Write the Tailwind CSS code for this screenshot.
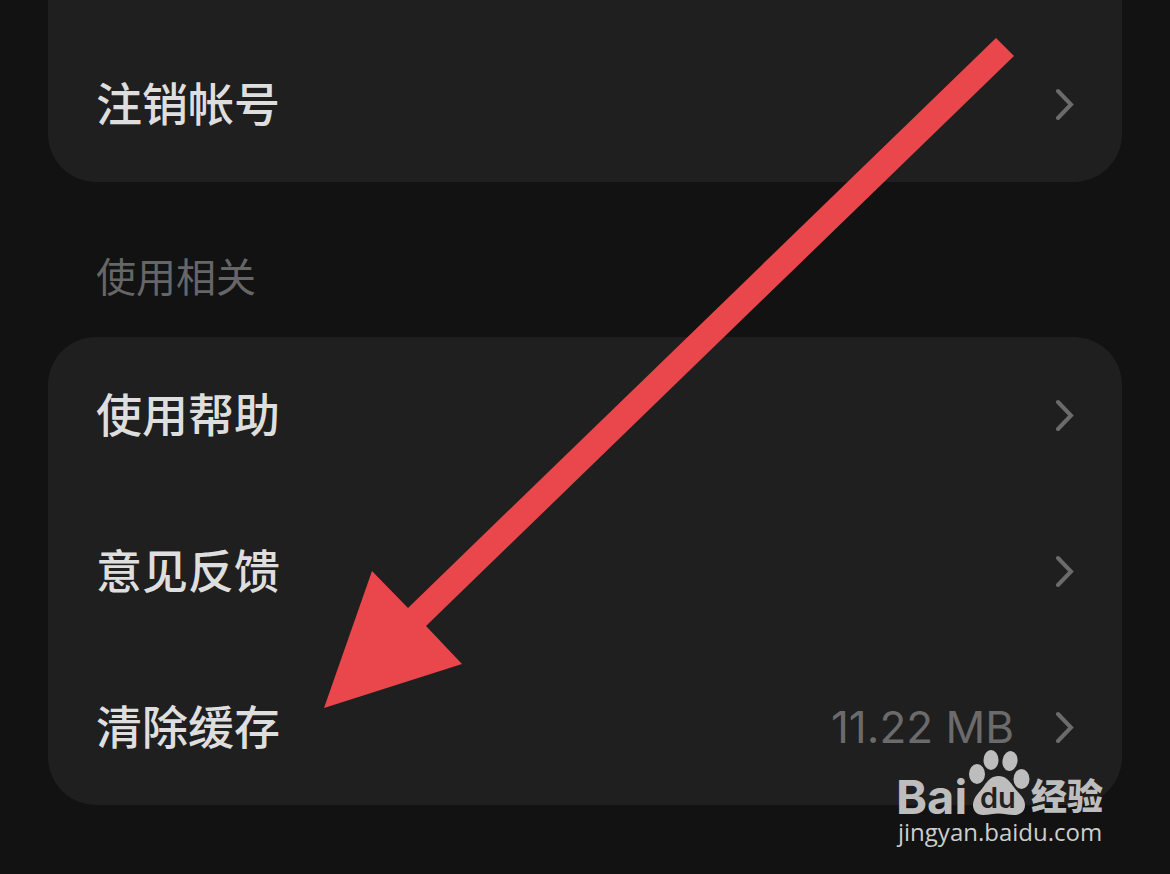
<!DOCTYPE html>
<html lang="zh-CN">
<head>
<meta charset="utf-8">
<meta name="viewport" content="width=device-width, initial-scale=1">
<title>设置</title>
<script src="https://cdn.jsdelivr.net/npm/@tailwindcss/browser@4"></script>
</head>
<body class="bg-[#121212]">
<main class="relative min-h-screen overflow-hidden bg-[#121212] px-12 pb-[69px] font-['Inter','Noto_Sans_CJK_SC',sans-serif] text-[46px] font-medium text-[#dedede]">
  <section class="rounded-b-[48px] bg-[#1f1f1f] pt-[26px]">
    <a href="#" class="flex h-[156px] items-center justify-between px-12">
      <span>注销帐号</span>
      <svg class="h-8 w-5" viewBox="0 0 20 32" fill="none" stroke="#6b6b6b" stroke-width="4" stroke-linecap="round" aria-hidden="true"><path d="M4 3 17 16.500 4 30"/></svg>
    </a>
  </section>
  <h2 class="flex h-[155px] items-center px-12 pt-9 text-[40px] font-normal text-[#666666]">使用相关</h2>
  <nav class="rounded-[48px] bg-[#1f1f1f]">
    <a href="#" class="flex h-[156px] items-center justify-between px-12">
      <span>使用帮助</span>
      <svg class="h-8 w-5" viewBox="0 0 20 32" fill="none" stroke="#6b6b6b" stroke-width="4" stroke-linecap="round" aria-hidden="true"><path d="M4 3 17 16.500 4 30"/></svg>
    </a>
    <a href="#" class="flex h-[156px] items-center justify-between px-12">
      <span>意见反馈</span>
      <svg class="h-8 w-5" viewBox="0 0 20 32" fill="none" stroke="#6b6b6b" stroke-width="4" stroke-linecap="round" aria-hidden="true"><path d="M4 3 17 16.500 4 30"/></svg>
    </a>
    <a href="#" class="flex h-[156px] items-center justify-between px-12">
      <span>清除缓存</span>
      <span class="flex items-center gap-10">
        <span class="text-[44px] font-normal text-[#6b6b6b]">11.22 MB</span>
        <svg class="h-8 w-5" viewBox="0 0 20 32" fill="none" stroke="#6b6b6b" stroke-width="4" stroke-linecap="round" aria-hidden="true"><path d="M4 3 17 16.500 4 30"/></svg>
      </span>
    </a>
  </nav>

  <svg class="pointer-events-none absolute top-[38px] left-[324px] h-[670px] w-[690px]" viewBox="0 0 690 670" aria-hidden="true">
    <path d="M672 0 690 18 102 588 138 626 0 670 48 533 84 570Z" fill="#e9474b"/>
  </svg>

  <svg class="pointer-events-none absolute top-[748px] right-[54px] h-[110px] w-[220px]" viewBox="0 0 220 110" role="img" aria-label="Baidu 经验 jingyan.baidu.com">
    <g fill="#bdbdbd">
      <ellipse cx="81" cy="26" rx="8" ry="10"/>
      <ellipse cx="95" cy="12" rx="7.5" ry="10"/>
      <ellipse cx="114" cy="13" rx="7.5" ry="10" transform="rotate(10 114 13)"/>
      <ellipse cx="125.500" cy="31" rx="8" ry="10"/>
      <path d="M102.500 28C96 28 92 32 88 38C84 44 77 49 77 57C77 63 81 67 87 67C93 67 97 65.500 102.500 65.500C108 65.500 112 67 118 67C125 67 129 63 129 57C129 49 121 44 117 38C113 32 109 28 102.500 28Z"/>
      <text x="0" y="66" font-family="Inter, sans-serif" font-size="47" font-weight="700">Bai</text>
      <text x="135" y="62" font-family="Noto Sans CJK SC, sans-serif" font-size="36" font-weight="900">经验</text>
    </g>
    <text x="84" y="60" font-family="Inter, sans-serif" font-size="29" font-weight="600" fill="#222222">du</text>
    <text x="2" y="93" font-family="Open Sans, sans-serif" font-size="24" font-weight="500" fill="#cdcdcd">jingyan.baidu.com</text>
  </svg>
</main>
</body>
</html>
